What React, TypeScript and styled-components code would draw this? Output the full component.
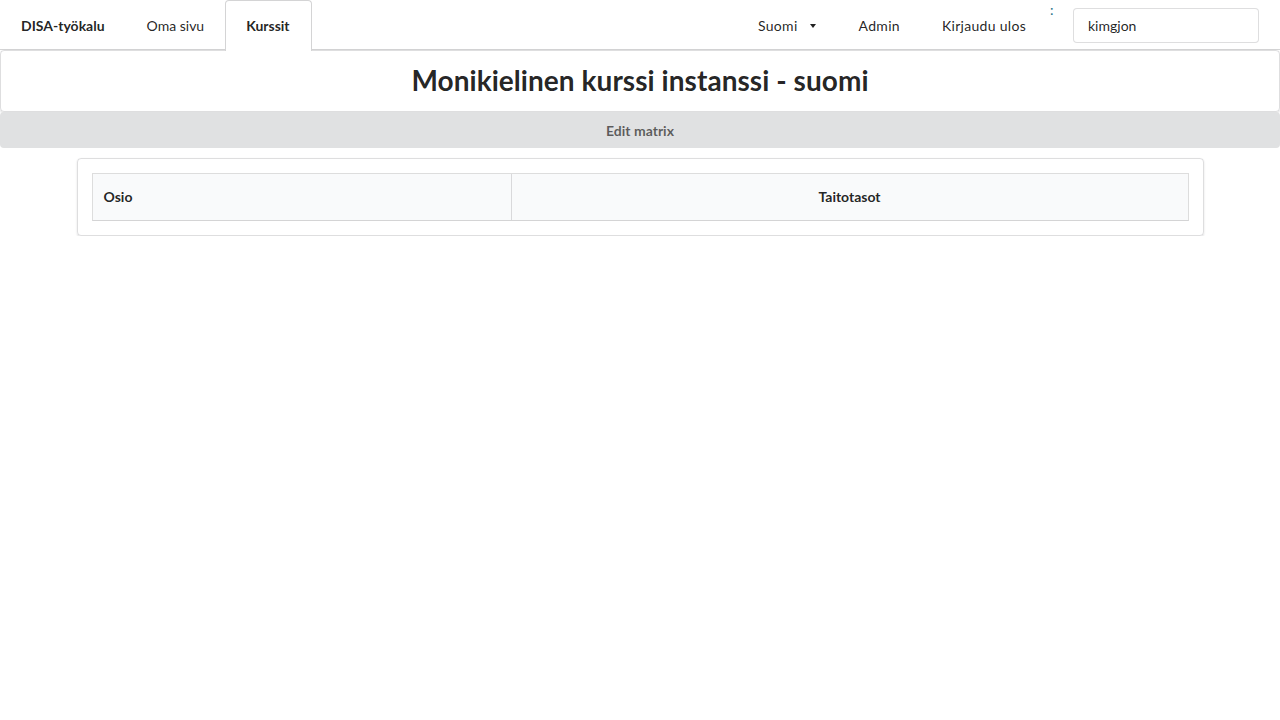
import * as React from 'react'
import styled, { createGlobalStyle } from 'styled-components'

const GlobalStyle = createGlobalStyle`
  html, body {
    margin: 0;
    padding: 0;
    background: #fff;
    font-family: Lato, 'Helvetica Neue', Arial, sans-serif;
    font-size: 14px;
    line-height: 1.4285em;
    color: rgba(0, 0, 0, 0.87);
  }
  * { box-sizing: border-box; }
`

const Menu = styled.div`
  display: flex;
  align-items: stretch;
  height: 50px;
  border-bottom: 1px solid #d4d4d5;
`

const MenuItem = styled.a<{ $active?: boolean; $bold?: boolean; $wide?: number }>`
  display: flex;
  align-items: center;
  padding: 0 20px;
  margin-bottom: -1px;
  border: 1px solid transparent;
  border-bottom: none;
  border-radius: 4px 4px 0 0;
  color: rgba(0, 0, 0, 0.87);
  font-weight: ${p => (p.$bold || p.$active ? 700 : 400)};
  letter-spacing: ${p => (p.$wide ? `${p.$wide}px` : 'normal')};
  cursor: pointer;
  ${p => p.$active && `
    background: #fff;
    border-color: #d4d4d5;
    height: 51px;
    padding: 0 21px 0 20px;
  `}
`

const RightMenu = styled.div`
  display: flex;
  align-items: stretch;
  margin-left: auto;
`

const Caret = styled.span`
  display: inline-block;
  margin-left: 12px;
  margin-right: 1px;
  width: 0;
  height: 0;
  border-left: 3.5px solid transparent;
  border-right: 3.5px solid transparent;
  border-top: 4px solid rgba(0, 0, 0, 0.87);
`

const ColonItem = styled.div`
  padding: 0 0 0 3px;
  font-size: 14px;
  line-height: 20px;
  color: #276f86;
  width: 26px;
`

const InputItem = styled.div`
  display: flex;
  align-items: center;
  padding: 1px 21px 0 0;
`

const Input = styled.input`
  width: 186px;
  height: 35px;
  padding: 0 14px;
  font-family: Lato, 'Helvetica Neue', Arial, sans-serif;
  font-size: 14px;
  color: rgba(0, 0, 0, 0.87);
  border: 1px solid rgba(34, 36, 38, 0.15);
  border-radius: 4px;
  outline: none;
`

const HeaderSegment = styled.div`
  border: 1px solid rgba(34, 36, 38, 0.15);
  border-radius: 4px;
  box-shadow: 0 1px 2px 0 rgba(34, 36, 38, 0.15);
  height: 62px;
  padding-bottom: 3px;
  display: flex;
  align-items: center;
  justify-content: center;
`

const Title = styled.h2`
  margin: 0;
  font-size: 28px;
  font-weight: 700;
  line-height: 34px;
  letter-spacing: 0.05px;
  color: rgba(0, 0, 0, 0.87);
`

const WideButton = styled.button`
  display: block;
  width: 100%;
  height: 36px;
  border: none;
  border-radius: 4px;
  background: #e0e1e2;
  color: rgba(0, 0, 0, 0.6);
  font-family: Lato, 'Helvetica Neue', Arial, sans-serif;
  font-size: 14px;
  font-weight: 700;
  cursor: pointer;
`

const Container = styled.div`
  width: 1127px;
  margin: 10px auto 0;
`

const Segment = styled.div`
  padding: 14px;
  border: 1px solid rgba(34, 36, 38, 0.15);
  border-radius: 4px;
  box-shadow: 0 1px 2px 0 rgba(34, 36, 38, 0.15);
`

const Table = styled.table`
  width: 100%;
  border-collapse: separate;
  border-spacing: 0;
  border: 1px solid rgba(34, 36, 38, 0.15);
  border-bottom-color: #d4d4d5;
`

const Th = styled.th<{ $center?: boolean; $width?: number }>`
  background: #f9fafb;
  text-align: ${p => (p.$center ? 'center' : 'left')};
  padding: 13px 11px;
  height: 46px;
  font-weight: 700;
  font-size: 14px;
  color: rgba(0, 0, 0, 0.87);
  ${p => p.$width && `width: ${p.$width}px;`}
  & + & {
    border-left: 1px solid rgba(34, 36, 38, 0.15);
  }
`

export default function App() {
  return (
    <>
      <GlobalStyle />
      <Menu>
        <MenuItem $bold>DISA-työkalu</MenuItem>
        <MenuItem>Oma sivu</MenuItem>
        <MenuItem $active>Kurssit</MenuItem>
        <RightMenu>
          <MenuItem $wide={0.3}>
            Suomi
            <Caret />
          </MenuItem>
          <MenuItem $wide={0.3}>Admin</MenuItem>
          <MenuItem $wide={0.3}>Kirjaudu ulos</MenuItem>
          <ColonItem>:</ColonItem>
          <InputItem>
            <Input defaultValue="kimgjon" />
          </InputItem>
        </RightMenu>
      </Menu>
      <HeaderSegment>
        <Title>Monikielinen kurssi instanssi - suomi</Title>
      </HeaderSegment>
      <WideButton>Edit matrix</WideButton>
      <Container>
        <Segment>
          <Table>
            <thead>
              <tr>
                <Th $width={418}>Osio</Th>
                <Th $center>Taitotasot</Th>
              </tr>
            </thead>
          </Table>
        </Segment>
      </Container>
    </>
  )
}
